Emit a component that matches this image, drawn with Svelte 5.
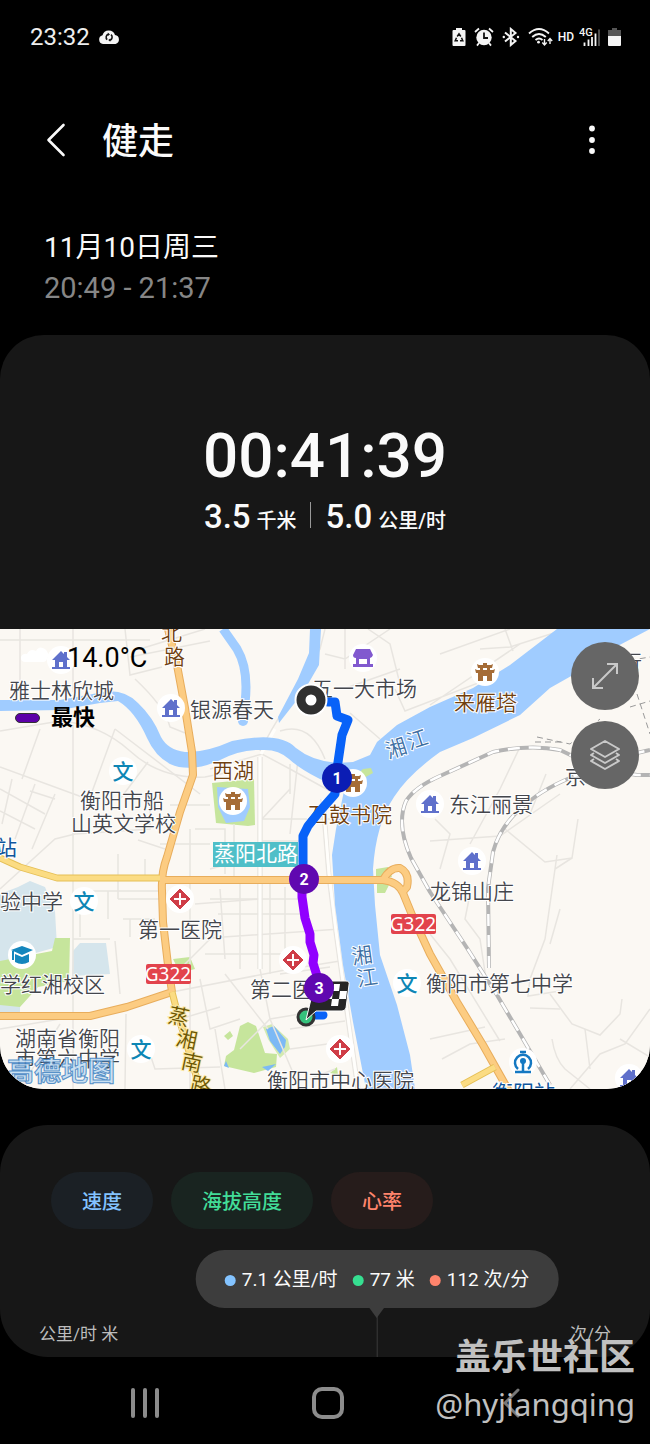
<script>
  const houses = [[61, 31], [171, 79], [430, 175], [472, 232], [629, 449]];
  const schools = [[123, 142], [84, 272], [141, 420], [407, 354]];
  const hospitals = [[180, 270], [293, 331], [340, 420]];
  const pavilions = [[485, 43], [233, 172], [353, 154]];

  const labels = [
    { t: '雅士林欣城', x: 9, y: 69 },
    { t: '银源春天', x: 190, y: 88 },
    { t: '衡阳市船', x: 80, y: 179 },
    { t: '山英文学校', x: 71, y: 202 },
    { t: '五一大市场', x: 312, y: 67 },
    { t: '东江丽景', x: 449, y: 183 },
    { t: '龙锦山庄', x: 430, y: 270 },
    { t: '衡阳市第七中学', x: 426, y: 362 },
    { t: '第一医院', x: 138, y: 308 },
    { t: '第二医院', x: 250, y: 368 },
    { t: '衡阳市中心医院', x: 267, y: 459 },
    { t: '验中学', x: 0, y: 280 },
    { t: '学红湘校区', x: 0, y: 363 },
    { t: '湖南省衡阳', x: 15, y: 417 },
    { t: '市第六中学', x: 15, y: 437 },
    { t: '京', x: 565, y: 155 },
    { t: '行', x: 621, y: 41 },
    { t: '北', x: 161, y: 11, k: 'brown' },
    { t: '路', x: 164, y: 35, k: 'brown' },
    { t: '西湖', x: 212, y: 149, k: 'brown' },
    { t: '来雁塔', x: 454, y: 81, k: 'brown' },
    { t: '石鼓书院', x: 308, y: 193, k: 'brown' },
    { t: '站', x: -4, y: 226, k: 'blue' },
    { t: '衡阳站', x: 492, y: 471, k: 'blue' }
  ];
  const slanted = [
    { t: '湘', x: 396, y: 119, r: -18, k: 'water' },
    { t: '江', x: 417, y: 110, r: -18, k: 'water' },
    { t: '湘', x: 362, y: 326, r: -8, k: 'water' },
    { t: '江', x: 367, y: 348, r: -8, k: 'water' },
    { t: '蒸', x: 179, y: 387, r: 12, k: 'olive' },
    { t: '湘', x: 187, y: 410, r: 12, k: 'olive' },
    { t: '南', x: 192, y: 433, r: 12, k: 'olive' },
    { t: '路', x: 201, y: 456, r: 12, k: 'olive' }
  ];
  const shields = [[146, 335], [391, 285]];
  const stops = [
    { n: 1, x: 337, y: 149, c: '#0b1db4' },
    { n: 2, x: 304, y: 250, c: '#6008b0' },
    { n: 3, x: 319, y: 359, c: '#6008b0' }
  ];

  const mainRoad = 'M168 0 L177 36 L185 79 L192 123 L193 146 L180 183 L167 228 Q161 244 162 262 L163 293 L168 336 L172 363 M160 251 H383 Q398 253 403 264 L412 286 L430 325 L457 373 L483 416 L510 464 M383 251 Q390 238 400 239 Q410 244 407 258 L402 264 M0 387 H90 L127 378 L172 363';
  const sideRoad = 'M0 229 L20 238 L57 249 H160 M172 363 L178 386 L200 460 M495 438 L462 456';
  const rail = 'M550 456 L497 366 L467 319 L430 263 L411 229 Q396 195 406 172 Q415 158 440 147 L493 123 Q530 115 560 121 L600 140 L637 146 H650 M489 339 L488 259 L493 223 Q500 196 525 176 Q545 158 580 145 L637 124 L650 121';
  const minor = [
    'M0 11 H150 M20 0 V60 M125 0 L130 46 L162 38 M130 28 L210 12 M73 0 V63 M140 20 L205 0 M73 96 V460',
    'M0 102 L60 92 Q100 95 130 122 Q160 150 205 148 L225 144 M115 100 L85 182 M40 100 L22 150 M135 50 Q165 78 170 98 L185 104',
    'M0 138 L82 168 M115 100 L200 165 M148 133 L120 170 M30 162 L55 170 M0 160 L45 185 M0 182 L35 200 M12 150 L2 195 M35 155 L15 210 M55 165 L32 220',
    'M0 260 L55 210 L75 205 L150 200 L150 170 M138 211 L165 220 M190 200 V460 M195 200 H225 V245 M170 176 H210 M160 215 H210',
    'M210 140 L262 125 L290 140 L330 162 M260 122 L272 100 L320 20 L325 0 M262 128 V340 M258 128 V340 M290 135 V165 M262 190 H330 M262 212 H300',
    'M290 160 L262 190 M298 130 L290 205 M325 170 L330 240 L337 300 L360 460 M321 170 L327 245 L334 302 L356 460',
    'M325 25 L345 30 L390 0 M345 0 V40 M368 0 L390 15 L400 55 M280 102 Q310 92 325 130 M350 84 L380 110 M343 60 L400 40',
    'M395 60 L405 82 L650 -12 M440 25 L510 0 M430 76 L520 15 M505 0 L513 22 M480 20 L510 18 L560 2 M570 0 L585 30',
    'M520 118 L500 160 L470 215 M546 145 L530 185 M435 190 L450 205 L440 240 M505 200 L545 233 L572 229 L578 190 M430 212 L500 207 L560 165',
    'M572 229 L555 240 M557 226 L545 310 L530 350 L528 367 L560 362 M550 315 L560 280 M470 265 L465 290 L480 310 L486 350',
    'M430 305 L450 330 L500 412 M430 410 L485 398 M442 430 L470 415 L505 410 M550 365 L572 395 L600 406 L620 385 L622 370',
    'M552 410 Q555 430 565 440 L590 460 M585 400 L590 440 M650 380 L625 415 L600 425 L570 460 M620 410 L650 428 M530 379 L560 380',
    'M80 270 V308 M90 262 H160 M108 262 V290 M118 225 V270 M118 270 H160 M145 230 V250 M123 290 H155 M130 290 V308 M115 312 L120 365 M73 310 H110',
    'M0 400 L60 390 M126 385 L125 460 M60 395 L20 460 M145 410 L155 440 L220 438 M172 363 L290 340 L340 332 M220 260 L225 330 M195 275 L260 270',
    'M210 270 H300 M218 285 H300 M210 240 L240 232 H300 M234 195 V250 M240 250 V340 M270 255 V345 M285 258 V320 M195 310 L340 300 M205 325 H290',
    'M260 340 L270 390 L300 460 M225 345 L268 400 M240 420 L270 390 L330 380 M290 400 L345 392 M280 345 L330 338 M290 420 L350 412',
    'M200 350 L210 400 L240 390 M175 345 L215 305 M180 390 L220 378 M215 400 L225 460 M310 450 L335 440'
  ];
</script>

{#snippet pin(x, y)}
  <circle cx={x} cy={y} r="14" fill="#fff" />
{/snippet}

<div class="phone">
  <header class="status">
    <div class="left">
      <span class="clock">23:32</span>
      <svg width="22" height="16" viewBox="0 0 22 16" aria-hidden="true">
        <path d="M5 15 A4.5 4.5 0 0 1 4.5 6.2 A6.5 6.5 0 0 1 17 6 A4.6 4.6 0 0 1 17.5 15 Z" fill="#f4f4f4" />
        <path d="M10.3 5.2 A3.2 3.2 0 0 0 9.2 10.6 M11.9 11.2 A3.2 3.2 0 0 0 13 5.7" fill="none" stroke="#111" stroke-width="1.6" />
        <path d="M9.8 3.6 L12 5.4 L9.8 7 Z M12.3 9.4 L10.2 11 L12.3 12.8 Z" fill="#111" />
      </svg>
    </div>
    <div class="right">
      <svg width="14" height="20" viewBox="0 0 14 20" aria-hidden="true">
        <path d="M4 1 H10 V3 H12.500 Q13.500 3 13.500 4 V18 Q13.500 19 12.500 19 H1.500 Q.5 19 .5 18 V4 Q.5 3 1.500 3 H4 Z" fill="#f4f4f4" />
        <path d="M5.200 9.500 L7 6.800 L8.800 9.500 M4.500 10.800 L3.200 13.800 H6 M9.500 10.800 L10.800 13.800 H8" fill="none" stroke="#111" stroke-width="1.500" />
      </svg>
      <svg width="20" height="20" viewBox="0 0 20 20" aria-hidden="true">
        <circle cx="10" cy="10.500" r="7.700" fill="#f4f4f4" />
        <path d="M1 5 L5 1.500 M19 5 L15 1.500 M5 16 L3 18.600 M15 16 L17 18.600" stroke="#f4f4f4" stroke-width="1.800" />
        <path d="M10 5.500 V11 H14" fill="none" stroke="#111" stroke-width="1.800" />
      </svg>
      <svg width="18" height="20" viewBox="0 0 18 20" aria-hidden="true">
        <path d="M3 5.500 L13.500 14 L8.800 18 V2 L13.500 6 L3 14.500" fill="none" stroke="#f4f4f4" stroke-width="2" />
        <circle cx="1.800" cy="10" r="1.200" fill="#f4f4f4" /><circle cx="16" cy="10" r="1.200" fill="#f4f4f4" />
      </svg>
      <svg width="25" height="20" viewBox="0 0 25 20" aria-hidden="true">
        <path d="M1 6.500 Q11 -2.500 21 6.500 M4.200 10 Q11 4 17.800 10 M7.500 13 Q11 10 14.500 13" fill="none" stroke="#f4f4f4" stroke-width="1.900" />
        <circle cx="10.500" cy="15.200" r="1.400" fill="#f4f4f4" />
        <path d="M16.500 12 V17.500 M14.300 15.500 L16.500 18 L18.700 15.500 M22 17 V12 M19.800 14 L22 11.500 L24.200 14" fill="none" stroke="#f4f4f4" stroke-width="1.400" />
      </svg>
      <span class="hd">HD</span>
      <svg width="21" height="20" viewBox="0 0 21 20" aria-hidden="true">
        <text x="0" y="9" class="g4">4G</text>
        <path d="M5.500 19 V15.500 M9.500 19 V12.500 M13 19 V10 M16.500 19 V6.500" stroke="#f4f4f4" stroke-width="1.800" />
        <path d="M20 19 V2.500" stroke="#555" stroke-width="1.800" />
      </svg>
      <svg width="13" height="20" viewBox="0 0 13 20" aria-hidden="true">
        <path d="M4 1 H9 V3 H13 V9 H0 V3 H4 Z" fill="#555" />
        <path d="M0 9 H13 V18 Q13 19 12 19 H1 Q0 19 0 18 Z" fill="#f4f4f4" />
      </svg>
    </div>
  </header>

  <div class="appbar">
    <button class="icon" aria-label="返回">
      <svg width="20" height="36" viewBox="0 0 20 36"><path d="M17.500 3 L2.500 18 L17.500 33" fill="none" stroke="#fafafa" stroke-width="2.600" stroke-linecap="round" stroke-linejoin="round" /></svg>
    </button>
    <h1>健走</h1>
    <button class="icon more" aria-label="更多">
      <svg width="8" height="30" viewBox="0 0 8 30" fill="#fafafa"><circle cx="4" cy="3.500" r="2.900" /><circle cx="4" cy="15" r="2.900" /><circle cx="4" cy="26" r="2.900" /></svg>
    </button>
  </div>

  <div class="when">
    <div>11月10日周三</div>
    <div class="time">20:49 - 21:37</div>
  </div>

  <section class="summary">
    <div class="duration">00:41:39</div>
    <div class="stats">
      <span class="num">3.5</span><span class="unit">千米</span>
      <span class="bar"></span>
      <span class="num">5.0</span><span class="unit">公里/时</span>
    </div>
  </section>

  <section class="map">
    <svg class="canvas" viewBox="0 0 650 460" role="img" aria-label="路线地图">
      <rect width="650" height="460" fill="#fbf8f3" />

      <path d="M0 265 L18 258 L30 252 L45 258 L55 282 L57 318 L0 334 Z M73 322 L80 314 L106 314 L110 345 L72 347 Z M0 376 H20 V386 H0 Z" fill="#d5e5ec" />
      <path d="M0 332 L52 322 L55 309 L70 309 L69 352 L38 358 L20 378 L0 376 Z" fill="#c6e59c" />
      <path d="M212 154 L254 150 L255 196 L248 197 L216 194 Z" fill="#c6e59c" />
      <path d="M217 158 L248 160 L250 178 L244 192 L226 194 L218 178 Z" fill="#a0ccff" />
      <path d="M173 330 L190 328 L195 340 L180 344 Z M376 240 L388 238 L392 248 L376 248 Z M377 254 L390 254 L385 264 L377 264 Z" fill="#c6e59c" />
      <path d="M224 407 L230 402 L233 407 L228 411 Z M240 397 L248 393 L256 397 L262 415 L265 424 L277 425 L276 438 L254 444 L224 437 L226 427 L234 421 Z" fill="#c6e59c" />
      <path d="M263 398 L272 395 L288 410 L290 420 L280 429 L268 410 Z" fill="#d3eab0" />
      <path d="M266 400 L274 397 L286 411 L285 418 L280 425 L270 412 Z M226 432 L229 439 L224 437 Z M262 438 L276 435 L268 442 Z" fill="#7cb9f5" />
      <path d="M330 444 L337 438 L338 446 Z" fill="#c6e59c" />

      <g fill="none" stroke="#e8e5e0" stroke-width="1.500">
        {#each minor as d}<path {d} />{/each}
      </g>
      <g fill="none" stroke="#fffefb" stroke-width="3"><path d="M260 128 V340 M323 170 L329 244 L336 302 L358 460 M261 125 L275 100" /></g>

      <g fill="#a0ccff">
        <path d="M0 71 H60 L98 64 Q122 58 138 74 Q153 88 161 108 Q168 121 185 123 Q205 124 232 112 Q280 102 296 119 Q312 132 337 134 L353 133 L370 126 L377 113 L397 96 L430 78 L473 59 L510 36 L557 0 H650 L612 20 L573 46 L550 59 L520 86 L473 109 L440 123 Q408 146 394 168 Q376 195 373 240 L375 276 L380 326 L397 376 L410 426 L415 460 H366 L353 393 L343 336 L335 276 L332 226 L336 200 L344 162 L318 149 Q300 140 289 130 Q278 120 262 121 Q240 120 218 132 Q190 144 170 135 Q155 127 147 109 Q135 82 118 72 L100 74 L60 81 L0 82 Z" />
        <path d="M310 0 H321 L319 36 L304 62 L279 94 L278 88 L298 50 L309 24 Z" />
        <circle cx="243" cy="92" r="5" />
      </g>
      <path d="M223 0 L237 20 Q249 40 245 74" fill="none" stroke="#a0ccff" stroke-width="9" />
      <path d="M354 148 L363 140 L371 139 L373 144 L362 150 Z" fill="#c6e59c" />

      <g fill="none" stroke-linejoin="round">
        <path d={mainRoad} stroke="#e8ad5c" stroke-width="8" />
        <path d={mainRoad} stroke="#fccc82" stroke-width="6" />
        <path d={sideRoad} stroke="#e5bf55" stroke-width="7" />
        <path d={sideRoad} stroke="#fbdc83" stroke-width="5" />
        <path d={rail} stroke="#b4b4b4" stroke-width="4" />
        <path d={rail} stroke="#fff" stroke-width="2.500" stroke-dasharray="12 9" />
        <path d="M537 108 L570 115 L600 90 M620 33 L650 28 M637 65 L650 105 M630 78 L650 72 M535 113 L565 113" stroke="#999" stroke-width="1" stroke-dasharray="6 4" />
      </g>

      {#each houses as [x, y]}
        {@render pin(x, y)}
        <path transform="translate({x} {y})" d="M-9 0 L0 -9 L3 -6 V-8 H6 V-3 L9 0 H6 V7 H9 V9 H-9 V7 H-6 V0 Z M-2 2 V7 H2 V2 Z" fill="#5f70cb" fill-rule="evenodd" />
      {/each}
      {#each hospitals as [x, y]}
        {@render pin(x, y)}
        <g transform="translate({x} {y})">
          <path d="M0 -10 L10 0 L0 10 L-10 0 Z" fill="#cf3d48" stroke="#cf3d48" stroke-linejoin="round" />
          <path d="M0 -6 V6 M-6 0 H6" stroke="#fff" stroke-width="2" />
        </g>
      {/each}
      {#each pavilions as [x, y]}
        {@render pin(x, y)}
        <path transform="translate({x} {y})" d="M-8 -8 L-6 -7 H-2 V-9 H2 V-7 H6 L8 -8 L7 -4 H5 V-2 H8 L10 -3 L9 1 H7 V9 H2 V4 H-2 V9 H-7 V1 H-9 L-10 -3 L-8 -2 H-5 V-4 H-7 Z M-2 -4 V-2 H2 V-4 Z" fill="#a56c37" fill-rule="evenodd" />
      {/each}
      {#each schools as [x, y]}
        {@render pin(x, y)}
        <text {x} y={y + 8} class="school">文</text>
      {/each}

      {@render pin(363, 29)}
      <path d="M356 20 H370 L373 26 Q372 29 370 29 V35 H373 V38 H353 V35 H356 V29 Q353 29 353 26 Z M359 30 V35 H367 V30 Z" fill="#8159cf" fill-rule="evenodd" />
      {@render pin(22, 326)}
      <path d="M11 321 L22 317 L33 321 L22 326 Z M15 325 L22 328 L29 325 V333 Q22 337 15 333 Z M12 322 H14 V331 H12 Z" fill="#1486bd" />
      {@render pin(523, 433)}
      <path d="M518 440 A8 8 0 1 1 528 440 M523 432 V442 M515 443 H531 M520 423 H526" fill="none" stroke="#1478c2" stroke-width="2.500" />
      <circle cx="523" cy="432" r="3" fill="#1478c2" />

      {#each labels as l}
        <text x={l.x} y={l.y} class="label {l.k ?? ''}">{l.t}</text>
      {/each}
      {#each slanted as l}
        <text transform="translate({l.x} {l.y}) rotate({l.r})" y="8" text-anchor="middle" class="label {l.k}">{l.t}</text>
      {/each}

      <rect x="213" y="213" width="85" height="25" fill="#4fbfc8" />
      <text x="214" y="232" class="plate">蒸阳北路</text>
      {#each shields as [x, y]}
        <rect {x} {y} width="45" height="20" rx="2" fill="#e2434c" />
        <text x={x + 22} y={y + 17} class="shield">G322</text>
      {/each}
      <text x="7" y="452" class="brand">高德地图</text>

      <g fill="none" stroke-width="9" stroke-linejoin="round" stroke-linecap="round">
        <path d="M328 73 L335 73 L337 87 L348 91 L342 106 L337 140 L335 165 L320 182 L308 197 L303 207 V250 M310 386 L323 386" stroke="#0862f8" />
        <path d="M302 250 L302 268 L305 289 L310 305 L310 313 L314 326 L313 334 L318 350" stroke="#9100ff" />
      </g>
      <circle cx="306" cy="388" r="8" fill="#35c27c" stroke="#333" stroke-width="3" />
      <path d="M323 352 H346 Q350 352 349 356 L346 379 Q345 382 342 382 H316 L306 391 L311 370 Z" fill="#262626" stroke="#fff" stroke-width="1" />
      <path d="M334 355 H340 L339 362 H333 Z M340 362 H347 L346 370 H339 Z M332 370 H339 L338 377 H331 Z M326 362 H333 L332 370 H325 Z" fill="#fff" />
      <circle cx="311" cy="71" r="11" fill="#fff" stroke="#fff" stroke-width="11" />
      <circle cx="311" cy="71" r="10" fill="#fff" stroke="#303030" stroke-width="9" />
      {#each stops as s}
        <circle cx={s.x} cy={s.y} r="15" fill={s.c} />
        <text x={s.x} y={s.y + 6} class="stop">{s.n}</text>
      {/each}
      <path d="M26 33 Q20 33 21 28 Q23 24 27 25 Q30 19 36 22 Q39 16 45 20 Q50 24 47 30 Q46 33 43 33 Z" fill="#fff" />
    </svg>
    <div class="legend">
      <div class="temp">14.0°C</div>
      <div class="fast"><i></i>最快</div>
    </div>
    <div class="controls">
      <button aria-label="全屏">
        <svg width="28" height="28" viewBox="0 0 28 28" fill="none" stroke="#c9c9c9" stroke-width="2"><path d="M2 26 L26 2 M16 2 H26 V12 M2 16 V26 H12" /></svg>
      </button>
      <button aria-label="图层">
        <svg width="30" height="32" viewBox="0 0 30 32" fill="none" stroke="#c9c9c9" stroke-width="2" stroke-linejoin="round"><path d="M15 2 L29 10 L15 18 L1 10 Z M4 14 L1 16 L15 24 L29 16 L26 14 M4 20 L1 22 L15 30 L29 22 L26 20" /></svg>
      </button>
    </div>
  </section>

  <section class="chart">
    <div class="chips">
      <button class="speed">速度</button>
      <button class="alt">海拔高度</button>
      <button class="heart">心率</button>
    </div>
    <div class="plot">
      <div class="tip">
        <span class="speed">7.1 公里/时</span>
        <span class="alt">77 米</span>
        <span class="heart">112 次/分</span>
      </div>
      <div class="axes"><span>公里/时 米</span><span>次/分</span></div>
    </div>
  </section>

  <nav>
    <button aria-label="最近"><svg width="30" height="32" viewBox="0 0 30 32"><path d="M3 3 V29 M15 3 V29 M27 3 V29" stroke="#8c8c8c" stroke-width="4" stroke-linecap="round" /></svg></button>
    <button aria-label="主页"><svg width="34" height="34" viewBox="0 0 34 34"><rect x="3" y="3" width="28" height="28" rx="8" fill="none" stroke="#8c8c8c" stroke-width="4" /></svg></button>
    <button aria-label="后退"><svg width="20" height="32" viewBox="0 0 20 32"><path d="M17 3 L4 16 L17 29" fill="none" stroke="#777" stroke-width="3" stroke-linecap="round" /></svg></button>
  </nav>

  <div class="mark">
    <strong>盖乐世社区</strong>
    <span>@hyjiangqing</span>
  </div>
</div>

<style>
  :global(body) { background: #000; }
  .phone {
    position: relative;
    background: #000;
    color: #fafafa;
    font-family: Roboto, "Noto Sans CJK SC", sans-serif;
    overflow: hidden;
  }
  button { border: 0; padding: 0; background: none; color: inherit; font: inherit; cursor: pointer; }
  svg { display: block; }

  .status { display: flex; justify-content: space-between; align-items: center; height: 74px; padding: 0 29px 0 30px; }
  .left { display: flex; align-items: center; gap: 8px; }
  .clock { font-size: 24px; line-height: 28px; color: #eee; }
  .right { display: flex; align-items: center; gap: 8px; }
  .hd { font-size: 12px; font-weight: 500; margin: 0 -3px; }
  .g4 { font: 500 11px Roboto, sans-serif; fill: #f4f4f4; }

  .appbar { display: flex; align-items: center; height: 132px; padding: 0 46px; }
  .icon { display: grid; place-items: center; }
  h1 { flex: 1; margin: 0 0 0 36px; padding-top: 4px; font-size: 36px; line-height: 40px; font-weight: 500; }
  .more { width: 24px; }

  .when { padding: 21px 44px 0; font-size: 28px; line-height: 41px; height: 108px; }
  .time { font-size: 29px; color: #868686; }

  .summary { display: flex; flex-direction: column; align-items: center; height: 210px; padding-top: 84px; background: #171717; border-radius: 44px 44px 0 0; }
  .duration { font-size: 62px; line-height: 74px; font-weight: 500; }
  .stats { display: flex; align-items: baseline; margin-top: 4px; line-height: 40px; font-weight: 500; }
  .num { font-size: 33px; }
  .unit { font-size: 20px; margin-left: 6px; }
  .bar { align-self: center; width: 1px; height: 26px; margin: 0 15px 8px 13px; background: #999; }

  .map { position: relative; overflow: hidden; border-radius: 0 0 44px 44px; background: #fbf8f3; }
  .canvas { width: 100%; height: auto; }
  .label { font: 350 21px "Noto Sans CJK SC", sans-serif; fill: #44464c; stroke: #fff; stroke-width: 2px; paint-order: stroke; }
  .brown { fill: #70400f; }
  .blue { fill: #10569c; font-weight: 400; }
  .water { fill: #3e6fa3; }
  .olive { fill: #6c5600; stroke: #fbe9a8; }
  .plate { font: 400 21px "Noto Sans CJK SC", sans-serif; fill: #fff; }
  .shield { font: 400 19px "Noto Sans", sans-serif; fill: #fff; text-anchor: middle; }
  .brand { font: 700 27px "Noto Sans CJK SC", sans-serif; fill: #c4ddf2; stroke: #4585c4; stroke-width: 1px; opacity: .9; }
  .school { font: 500 21px "Noto Sans CJK SC", sans-serif; fill: #0d86b5; text-anchor: middle; }
  .stop { font: 700 16px Roboto, sans-serif; fill: #fff; text-anchor: middle; }
  .legend { position: absolute; top: 13px; left: 15px; color: #000; }
  .temp { padding-left: 52px; font-size: 27px; line-height: 32px; }
  .fast { display: flex; align-items: center; gap: 11px; margin-top: 28px; font-size: 22px; line-height: 32px; font-weight: 700; }
  .fast i { box-sizing: border-box; width: 25px; height: 10px; border: 1px solid #333; border-radius: 5px; background: #5c00a8; }
  .controls { position: absolute; top: 13px; right: 11px; display: grid; gap: 11px; }
  .controls button { display: grid; place-items: center; width: 68px; height: 68px; border-radius: 50%; background: #666; }

  .chart { margin-top: 36px; padding-top: 47px; background: #171717; border-radius: 48px; overflow: hidden; }
  .chips { display: flex; gap: 18px; padding: 0 51px; }
  .chips button { height: 57px; padding: 0 31px; border-radius: 29px; font-size: 20px; font-weight: 500; }
  .chips .speed { color: #83c3ff; background: #1b2025; }
  .chips .alt { color: #42dd98; background: #192420; }
  .chips .heart { color: #ff846c; background: #261c1b; }
  .plot { position: relative; height: 128px; }
  .tip { position: absolute; left: 58%; top: 21px; display: flex; gap: 15px; transform: translateX(-50%); padding: 2px 29px 0; border-radius: 29px; background: #3d3d3d; font-size: 19px; line-height: 56px; white-space: nowrap; }
  .tip span { display: flex; align-items: center; gap: 6px; }
  .tip span::before { content: ""; width: 11px; height: 11px; border-radius: 50%; background: #83c3ff; }
  .tip .alt::before { background: #36df91; }
  .tip .heart::before { background: #ff846c; }
  .tip::before { content: ""; position: absolute; top: 58px; left: 50%; width: 1px; height: 60px; background: #3a3a3a; }
  .tip::after { content: ""; position: absolute; top: 57px; left: 50%; margin-left: -8px; border: 8px solid transparent; border-top: 11px solid #3d3d3d; border-bottom: 0; }
  .axes { display: flex; justify-content: space-between; padding: 93px 39px 0; font-size: 17px; line-height: 24px; color: #bdbdbd; }

  nav { display: grid; grid-template-columns: 1fr 1fr 1fr; place-items: center; height: 87px; padding: 4px 48px 0 54px; box-sizing: border-box; }
  .mark { position: absolute; right: 15px; bottom: 16px; display: flex; flex-direction: column; align-items: flex-end; color: #c0c0c0; pointer-events: none; }
  .mark strong { font-size: 36px; line-height: 44px; font-weight: 700; }
  .mark span { font: 400 31px/48px "Noto Sans", sans-serif; }
</style>
